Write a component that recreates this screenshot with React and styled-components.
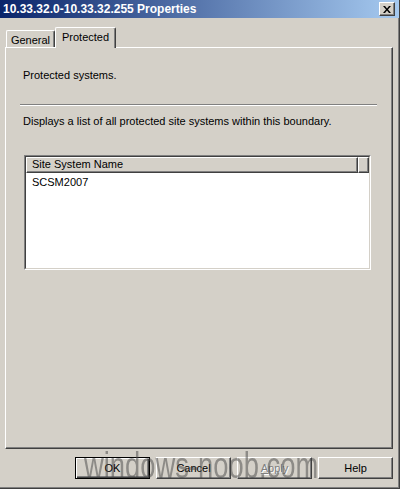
import React from "react";
import styled, { createGlobalStyle } from "styled-components";

const GlobalStyle = createGlobalStyle`
  html, body {
    margin: 0;
    padding: 0;
    background: #d4d0c8;
  }
  body {
    font-family: "Liberation Sans", Arial, sans-serif;
    font-size: 11px;
    color: #000;
  }
`;

const Window = styled.div`
  position: relative;
  width: 400px;
  height: 489px;
  box-sizing: border-box;
  display: flex;
  flex-direction: column;
  background: #d4d0c8;
  border-right: 1px solid #404040;
  border-bottom: 1px solid #404040;
  box-shadow: inset -1px -1px #808080;
  overflow: hidden;
`;

const TitleBar = styled.div`
  height: 18px;
  flex: none;
  display: flex;
  align-items: center;
  justify-content: space-between;
  padding: 0 4px 0 3px;
  background: linear-gradient(to right, #0a246a, #a6caf0);
`;

const Title = styled.span`
  color: #fff;
  font-size: 12px;
  font-weight: bold;
  white-space: nowrap;
`;

const CloseButton = styled.div`
  width: 16px;
  height: 14px;
  box-sizing: border-box;
  display: flex;
  align-items: center;
  justify-content: center;
  background: #d4d0c8;
  border-top: 1px solid #fff;
  border-left: 1px solid #fff;
  border-right: 1px solid #404040;
  border-bottom: 1px solid #404040;
  box-shadow: inset -1px -1px #808080;
`;

const Body = styled.div`
  flex: 1;
  display: flex;
  flex-direction: column;
  padding: 9px 6px 0 5px;
`;

const TabStrip = styled.div`
  height: 20px;
  display: flex;
  align-items: flex-end;
  padding-left: 1px;
  position: relative;
  z-index: 1;
`;

const Tab = styled.div`
  box-sizing: border-box;
  height: ${p => (p.$active ? "21px" : "17px")};
  margin-bottom: ${p => (p.$active ? "-1px" : "0")};
  width: ${p => p.$width}px;
  display: flex;
  justify-content: center;
  padding-top: 3px;
  background: #d4d0c8;
  border-top: 1px solid #fff;
  border-left: 1px solid #fff;
  border-right: 1px solid #404040;
  border-top-left-radius: 2px;
  border-top-right-radius: 2px;
  box-shadow: inset -1px 0 #808080;
  line-height: 13px;
  white-space: nowrap;
`;

const TabPage = styled.div`
  height: 402px;
  box-sizing: border-box;
  display: flex;
  flex-direction: column;
  align-items: flex-start;
  padding: 21px 0 0 14px;
  border-top: 1px solid #fff;
  border-left: 1px solid #fff;
  border-right: 1px solid #404040;
  border-bottom: 1px solid #404040;
  box-shadow: inset -1px -1px #808080;
`;

const Text = styled.div`
  line-height: 13px;
  padding-left: 3px;
  margin-top: ${p => p.$top || 0}px;
  white-space: nowrap;
`;

const Separator = styled.div`
  width: 357px;
  margin-top: 22px;
  border-top: 1px solid #808080;
  border-bottom: 1px solid #fff;
`;

const ListBox = styled.div`
  width: 347px;
  height: 115px;
  box-sizing: border-box;
  margin: 27px 0 0 4px;
  border-top: 1px solid #808080;
  border-left: 1px solid #808080;
  border-right: 1px solid #fff;
  border-bottom: 1px solid #fff;
`;

const ListInner = styled.div`
  height: 100%;
  box-sizing: border-box;
  background: #fff;
  border-top: 1px solid #404040;
  border-left: 1px solid #404040;
  border-right: 1px solid #d4d0c8;
  border-bottom: 1px solid #d4d0c8;
`;

const HeaderRow = styled.div`
  display: flex;
  height: 16px;
`;

const HeaderCell = styled.div`
  box-sizing: border-box;
  flex: ${p => (p.$grow ? 1 : "none")};
  width: ${p => (p.$grow ? "auto" : "11px")};
  background: #d4d0c8;
  border-top: 1px solid #fff;
  border-left: 1px solid #fff;
  border-right: 1px solid #404040;
  border-bottom: 1px solid #404040;
  box-shadow: inset -1px -1px #808080;
  padding-left: 5px;
  line-height: 13px;
  white-space: nowrap;
`;

const Row = styled.div`
  padding: 3px 0 0 6px;
  line-height: 13px;
`;

const ButtonRow = styled.div`
  display: flex;
  justify-content: flex-end;
  gap: 6px;
  margin-top: 8px;
`;

const Button = styled.div`
  width: 75px;
  height: 22px;
  box-sizing: border-box;
  display: flex;
  align-items: center;
  justify-content: center;
  background: #d4d0c8;
  color: ${p => (p.$disabled ? "#808080" : "#000")};
  text-shadow: ${p => (p.$disabled ? "1px 1px #fff" : "none")};
  border: 1px solid;
  border-color: ${p => (p.$primary ? "#000" : "#fff #404040 #404040 #fff")};
  box-shadow: ${p =>
    p.$primary
      ? "inset 1px 1px #fff, inset -1px -1px #404040, inset -2px -2px #808080"
      : "inset -1px -1px #808080"};
  padding-bottom: 1px;
`;

const Underlined = styled.span`
  text-decoration: underline;
`;

const Watermark = styled.div`
  position: absolute;
  left: 84px;
  top: 446px;
  font-size: 36px;
  line-height: 40px;
  color: rgba(70, 70, 70, 0.5);
  transform: scaleX(0.76);
  transform-origin: left top;
  white-space: nowrap;
  pointer-events: none;
`;

const CloseIcon = () => (
  <svg width="8" height="7" viewBox="0 0 8 7">
    <path d="M0 0h2l2 2.5L6 0h2L5 3.5 8 7H6L4 4.5 2 7H0l3-3.5z" fill="#000" />
  </svg>
);

export default function App() {
  return (
    <>
      <GlobalStyle />
      <Window>
        <TitleBar>
          <Title>10.33.32.0-10.33.32.255 Properties</Title>
          <CloseButton>
            <CloseIcon />
          </CloseButton>
        </TitleBar>
        <Body>
          <TabStrip>
            <Tab $width={49}>General</Tab>
            <Tab $active $width={61}>Protected</Tab>
          </TabStrip>
          <TabPage>
            <Text>Protected systems.</Text>
            <Separator />
            <Text $top={9}>
              Displays a list of all protected site systems within this boundary.
            </Text>
            <ListBox>
              <ListInner>
                <HeaderRow>
                  <HeaderCell $grow>Site System Name</HeaderCell>
                  <HeaderCell />
                </HeaderRow>
                <Row>SCSM2007</Row>
              </ListInner>
            </ListBox>
          </TabPage>
          <ButtonRow>
            <Button $primary>OK</Button>
            <Button>Cancel</Button>
            <Button $disabled>
              <Underlined>A</Underlined>pply
            </Button>
            <Button>Help</Button>
          </ButtonRow>
        </Body>
        <Watermark>windows-noob.com</Watermark>
      </Window>
    </>
  );
}
